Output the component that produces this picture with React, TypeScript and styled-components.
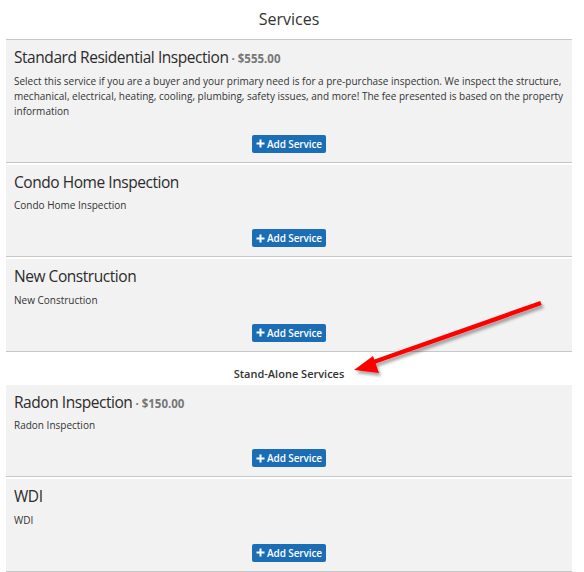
import React from 'react';
import styled, { createGlobalStyle } from 'styled-components';

const GlobalStyle = createGlobalStyle`
    body {
        margin: 0;
        background: #fff;
        font-family: 'Open Sans', 'Liberation Sans', sans-serif;
        color: #333;
    }
`

type Service = {
    name: string;
    price?: string;
    description: string;
}

const mainServices: Service[] = [
    {
        name: 'Standard Residential Inspection',
        price: '$555.00',
        description: 'Select this service if you are a buyer and your primary need is for a pre-purchase inspection. We inspect the structure, mechanical, electrical, heating, cooling, plumbing, safety issues, and more! The fee presented is based on the property information',
    },
    { name: 'Condo Home Inspection', description: 'Condo Home Inspection' },
    { name: 'New Construction', description: 'New Construction' },
]

const standAlone: Service[] = [
    { name: 'Radon Inspection', price: '$150.00', description: 'Radon Inspection' },
    { name: 'WDI', description: 'WDI' },
]

function ServiceCard({ service }: { service: Service }) {
    return (
        <Card>
            <CardTitle>
                {service.name}
                {service.price && <Price> · {service.price}</Price>}
            </CardTitle>
            <Description>{service.description}</Description>
            <ButtonRow>
                <AddButton>
                    <svg width="9" height="9" viewBox="0 0 9 9">
                        <path d="M4.5 0.5v8M0.5 4.5h8" stroke="#fff" strokeWidth="2" />
                    </svg>
                    Add Service
                </AddButton>
            </ButtonRow>
        </Card>
    )
}

function App() {
    return (
        <>
        <GlobalStyle />
        <Page>
            <Heading>Services</Heading>
            <List>
                {mainServices.map(s => <ServiceCard key={s.name} service={s} />)}
                <SubHeading>Stand-Alone Services</SubHeading>
                {standAlone.map(s => <ServiceCard key={s.name} service={s} />)}
            </List>
            <Arrow width="584" height="400" viewBox="0 0 584 400">
                <defs>
                    <filter id="sh" x="-10%" y="-10%" width="120%" height="130%">
                        <feDropShadow dx="2" dy="3" stdDeviation="1.5" floodColor="#000" floodOpacity="0.35" />
                    </filter>
                </defs>
                <g filter="url(#sh)">
                    <line x1="541" y1="303" x2="368" y2="364" stroke="#f00" strokeWidth="4.5" />
                    <polygon points="354,370 373,356 379,373" fill="#f00" />
                </g>
            </Arrow>
        </Page>
        </>
    )
}

const Page = styled.div`
    position: relative;
    width: 584px;
    min-height: 572px;
    padding: 0 12px 0 6px;
    box-sizing: border-box;
`

const Heading = styled.div`
    height: 39px;
    display: flex;
    align-items: center;
    justify-content: center;
    font-size: 16px;
    color: #333;
    padding-bottom: 1px;
    box-sizing: border-box;
`

const List = styled.div`
    border-top: 1px solid #c8c8c8;
`

const Card = styled.div`
    background: #f2f2f2;
    padding: 7px 8px 9px;
    border-bottom: 1px solid #c8c8c8;
    margin-bottom: 2px;
`

const CardTitle = styled.div`
    font-size: 15.5px;
    letter-spacing: -0.45px;
    line-height: 20px;
    height: 20px;
    color: #2b2b2b;
    margin-bottom: 6.5px;
`

const Price = styled.span`
    font-size: 11.5px;
    font-weight: 700;
    letter-spacing: 0;
    line-height: 1;
    color: #777;
`

const Description = styled.div`
    font-size: 10px;
    line-height: 15px;
    color: #333;
`

const ButtonRow = styled.div`
    display: flex;
    justify-content: center;
    margin-top: 16px;
`

const AddButton = styled.button`
    display: flex;
    align-items: center;
    gap: 2px;
    height: 18px;
    padding: 0 4px;
    border: none;
    border-radius: 2px;
    background: #1b6db6;
    color: #fff;
    font-family: 'Open Sans', 'Liberation Sans', sans-serif;
    font-size: 10px;
    font-weight: 600;
    letter-spacing: -0.1px;
`

const SubHeading = styled.div`
    height: 31px;
    display: flex;
    align-items: center;
    justify-content: center;
    padding-top: 9px;
    box-sizing: border-box;
    font-size: 11px;
    font-weight: 600;
    color: #333;
`

const Arrow = styled.svg`
    position: absolute;
    left: 0;
    top: 0;
    pointer-events: none;
`

export default App;
